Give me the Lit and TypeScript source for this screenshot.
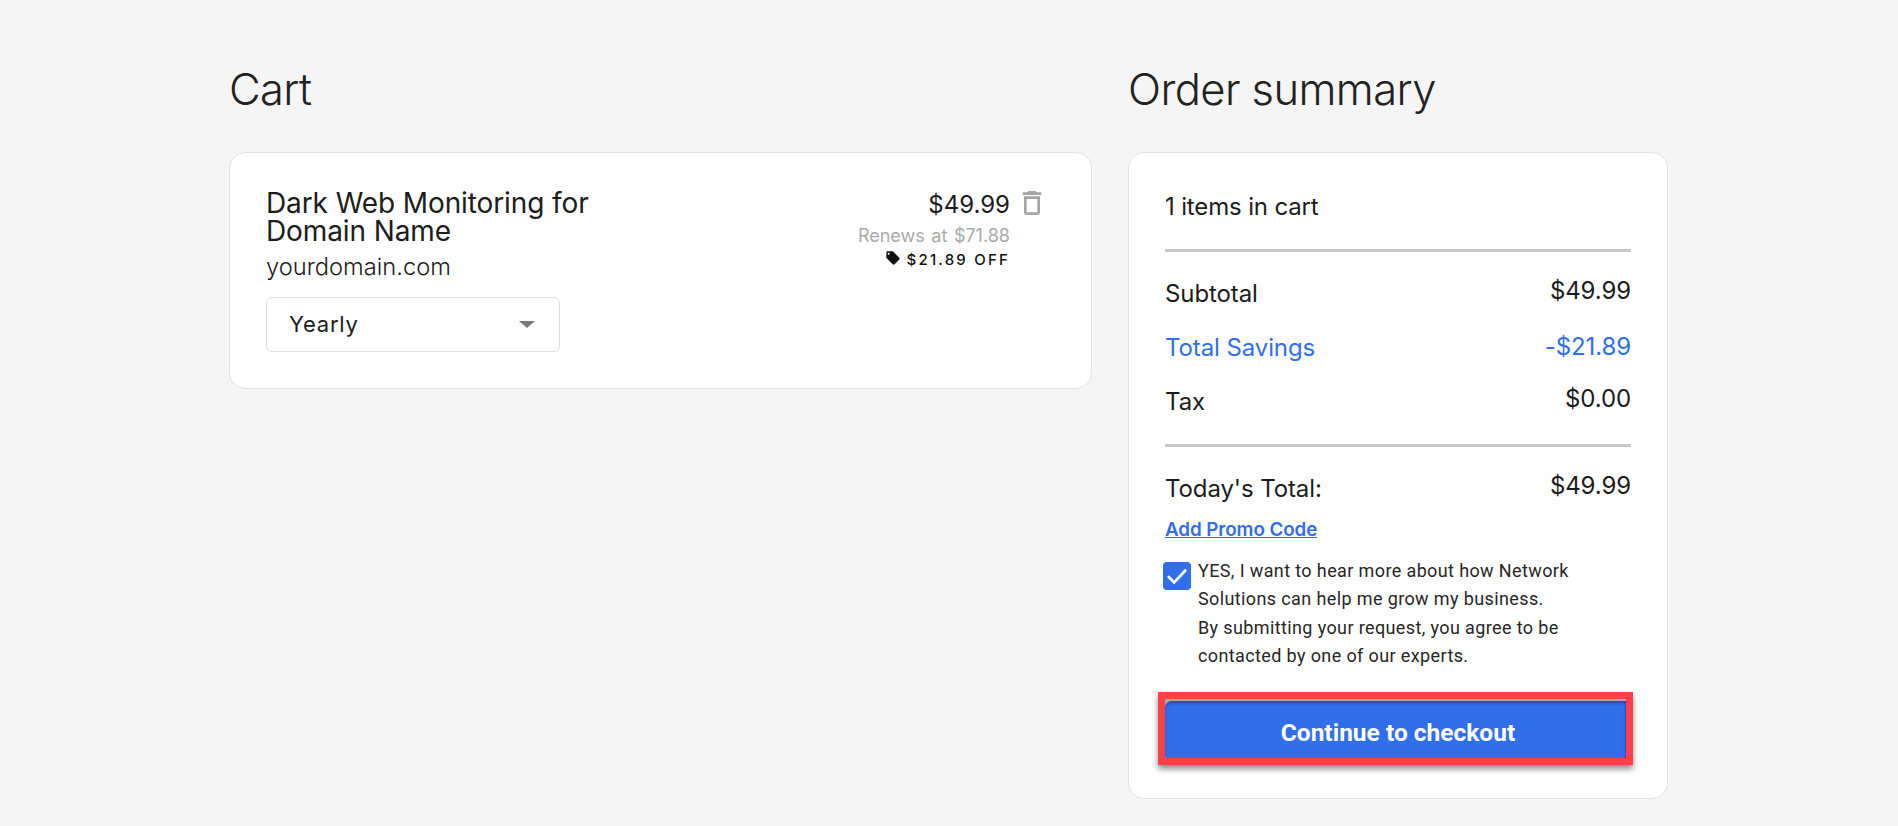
import { LitElement, html, css } from "lit";
import { customElement } from "lit/decorators.js";

@customElement("app-root")
export class AppRoot extends LitElement {
  static styles = css`
    :host { display: block; min-height: 826px; background: #f5f5f5; border-top: 1px solid #f9f9f9; box-sizing: border-box; color: #1c1c1c; font-family: Inter, "Liberation Sans", sans-serif; }
    * { box-sizing: border-box; }
    .page { display: grid; grid-template-columns: 863px 540px; column-gap: 36px; padding: 0 0 0 229px; }
    h1 { margin: 0; height: 151px; padding-top: 62px; font-size: 43.5px; line-height: 52px; font-weight: 300; letter-spacing: -0.6px; color: #222; }
    .card { background: #fff; border: 1px solid #e2e2e2; border-radius: 16px; }
    .item { height: 237px; padding: 36px 0 0 36px; display: flex; justify-content: space-between; }
    .name { font-size: 28px; line-height: 28px; font-weight: 400; width: 360px; letter-spacing: -0.1px; }
    .domain { font-size: 23.7px; line-height: 28px; font-weight: 300; margin-top: 8px; }
    .select { width: 294px; height: 55px; margin-top: 16px; border: 1px solid #dedede; border-radius: 6px; display: flex; align-items: center; justify-content: space-between; padding: 0 24px 2px 22px; font-size: 22px; letter-spacing: 0.75px; }
    .caret { width: 0; height: 0; border-left: 8px solid transparent; border-right: 8px solid transparent; border-top: 7px solid #7a7a7a; margin-top: 2px; }
    .prices { display: flex; flex-direction: column; align-items: flex-end; padding-right: 81px; position: relative; }
    .price { font-size: 24px; line-height: 30px; margin-top: 1px; }
    .renews { font-size: 18px; line-height: 22px; color: #a9a9a9; margin-top: 5px; word-spacing: 1.5px; }
    .off { display: flex; align-items: center; gap: 6px; font-size: 15px; line-height: 18px; font-weight: 500; letter-spacing: 2.2px; margin-top: 4px; color: #111; }
    .off svg { width: 16px; height: 16px; margin-top: -4px; }
    .trash { position: absolute; right: 43px; top: -2px; width: 32px; height: 32px; fill: #a5a5a5; }
    .summary { height: 647px; padding: 40px 36px 0 36px; }
    .count { font-size: 24px; line-height: 28px; height: 56px; font-weight: 400; letter-spacing: -0.15px; }
    hr { border: 0; height: 3px; background: #c8c8c8; margin: 0; }
    .row { display: flex; justify-content: space-between; font-size: 24px; line-height: 28px; height: 54px; letter-spacing: -0.1px; }
    .row span:first-child { padding-top: 3px; }
    .rows { padding-top: 25px; height: 192px; }
    .blue { color: #316ee9; }
    .blue .val { margin-top: 2px; }
    .total { padding-top: 25px; height: 72px; }
    .promo { font-size: 18.8px; line-height: 22px; font-weight: 600; color: #316ee9; text-decoration: underline; display: block; letter-spacing: -0.08px; }
    .consent { display: flex; gap: 7px; margin-top: 16px; margin-left: -2px; font-family: Roboto, sans-serif; font-size: 18px; line-height: 28.4px; letter-spacing: 0.38px; color: #262626; }
    .box { flex: none; width: 28px; height: 28px; margin-top: 5px; background: #316ee9; border-radius: 4px; display: flex; align-items: center; justify-content: center; }
    .box svg { width: 22px; height: 22px; }
    .frame { margin: 21px 0 0 -7px; width: 475px; height: 73px; border: 7px solid #fa4147; background: #a9a9a9; box-shadow: 0 4px 6px rgba(0,0,0,.45); padding-top: 2px; }
    .cta { height: 100%; border-radius: 7px 0 0 2px; background: #316ee9; color: #fff; font-family: Roboto, sans-serif; font-weight: 700; font-size: 24.5px; padding: 7px 0 0 5px; display: flex; align-items: center; justify-content: center; box-shadow: inset 0 3px 3px -1px rgba(20,40,110,.55), inset -2px 0 2px -1px rgba(20,40,110,.35); }
  `;

  render() {
    return html`
      <div class="page">
        <section>
          <h1>Cart</h1>
          <div class="card item">
            <div>
              <div class="name">Dark Web Monitoring for Domain Name</div>
              <div class="domain">yourdomain.com</div>
              <div class="select"><span>Yearly</span><span class="caret"></span></div>
            </div>
            <div class="prices">
              <div class="price">$49.99</div>
              <div class="renews">Renews at $71.88</div>
              <div class="off">
                <svg viewBox="0 0 24 24" fill="#111"><path d="M21.41 11.58l-9-9C12.05 2.22 11.55 2 11 2H4c-1.1 0-2 .9-2 2v7c0 .55.22 1.05.59 1.42l9 9c.36.36.86.58 1.41.58.55 0 1.05-.22 1.41-.59l7-7c.37-.36.59-.86.59-1.41 0-.55-.23-1.06-.59-1.42zM5.5 7C4.67 7 4 6.33 4 5.5S4.67 4 5.5 4 7 4.67 7 5.5 6.33 7 5.5 7z"/></svg>
                <span>$21.89 OFF</span>
              </div>
              <svg class="trash" viewBox="0 0 24 24"><path d="M6 19c0 1.1.9 2 2 2h8c1.1 0 2-.9 2-2V7H6v12zM8 9h8v10H8V9zm7.5-5l-1-1h-5l-1 1H5v2h14V4z"/></svg>
            </div>
          </div>
        </section>
        <section>
          <h1>Order summary</h1>
          <div class="card summary">
            <div class="count">1 items in cart</div>
            <hr />
            <div class="rows">
              <div class="row"><span>Subtotal</span><span class="val">$49.99</span></div>
              <div class="row blue"><span>Total Savings</span><span class="val">-$21.89</span></div>
              <div class="row"><span>Tax</span><span class="val">$0.00</span></div>
            </div>
            <hr />
            <div class="row total"><span>Today's Total:</span><span class="val">$49.99</span></div>
            <a class="promo">Add Promo Code</a>
            <div class="consent">
              <span class="box"><svg viewBox="0 0 24 24" fill="none" stroke="#fff" stroke-width="3" stroke-linecap="round" stroke-linejoin="round"><path d="M3 13l6 6L21 6"/></svg></span>
              <div>YES, I want to hear more about how Network<br />Solutions can help me grow my business.<br />By submitting your request, you agree to be<br />contacted by one of our experts.</div>
            </div>
            <div class="frame"><div class="cta">Continue to checkout</div></div>
          </div>
        </section>
      </div>
    `;
  }
}
